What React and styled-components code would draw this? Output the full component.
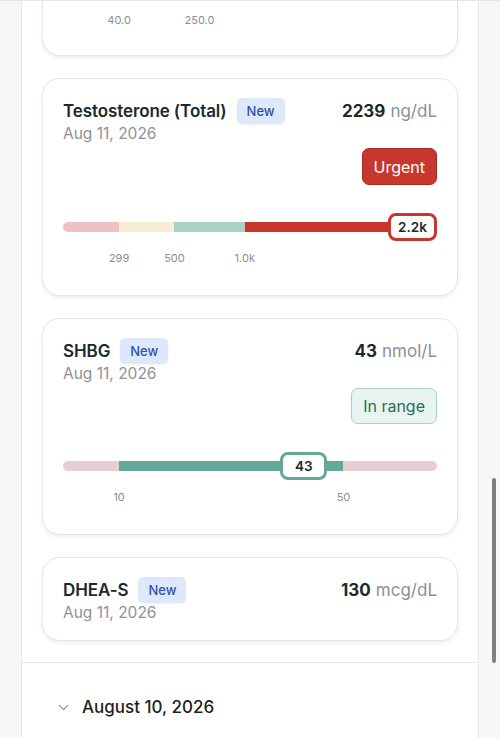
import React from 'react'
import styled, { createGlobalStyle } from 'styled-components'
import { ChevronDown } from 'lucide-react'

const GlobalStyle = createGlobalStyle`
  html, body {
    margin: 0;
    padding: 0;
    background: #f7f7f7;
    font-family: Inter, "Noto Sans", "Liberation Sans", sans-serif;
    -webkit-font-smoothing: antialiased;
  }
  * {
    box-sizing: border-box;
  }
`

const Screen = styled.div`
  height: 738px;
  overflow: hidden;
  border-top: 1px solid #e6e6e6;
  position: relative;
`

const Panel = styled.div`
  width: 458px;
  margin: 0 0 0 21px;
  background: #fff;
  border-left: 1px solid #e8e8e8;
  border-right: 1px solid #e8e8e8;
  min-height: 100%;
`

const List = styled.div`
  display: flex;
  flex-direction: column;
  gap: 22px;
  padding: 0 20px 21px;
  border-bottom: 1px solid #e8e8e8;
`

const Card = styled.div`
  background: #fff;
  border: 1px solid #e6e6e6;
  border-radius: 18px;
  box-shadow: 0 2px 4px rgba(0, 0, 0, 0.07);
  padding: 19px 20px 18px;
`

/* the card that is scrolled past the top edge: only its tail shows */
const CardTail = styled(Card)`
  border-top: none;
  border-radius: 0 0 18px 18px;
  padding-top: 12px;
  padding-bottom: 16px;
`

const HeaderRow = styled.div`
  display: flex;
  align-items: center;
  justify-content: space-between;
  height: 26px;
`

const TitleWrap = styled.div`
  display: flex;
  align-items: center;
  gap: 10px;
`

const Title = styled.div`
  font-size: 17px;
  font-weight: 600;
  color: #1b2a2a;
  letter-spacing: -0.1px;
`

const NewBadge = styled.span`
  background: #dfe8fb;
  color: #3150a6;
  font-size: 13px;
  font-weight: 500;
  border-radius: 5px;
  padding: 0 10px;
  height: 26px;
  display: inline-flex;
  align-items: center;
  box-shadow: 0 1px 2px rgba(50, 80, 160, 0.08);
`

const Value = styled.div`
  font-size: 17px;
  font-weight: 700;
  color: #1b2a2a;
  span {
    font-weight: 400;
    color: #8a9196;
    margin-left: 5px;
  }
`

const DateText = styled.div`
  font-size: 15.5px;
  line-height: 18px;
  margin-top: 1px;
  color: #8c9297;
`

const StatusRow = styled.div`
  display: flex;
  justify-content: flex-end;
  margin-top: 5px;
`

const Status = styled.div`
  height: ${p => (p.$urgent ? '37px' : '36px')};
  padding: 0 11px;
  border-radius: 7px;
  display: flex;
  align-items: center;
  font-size: 16px;
  background: ${p => (p.$urgent ? '#c8372e' : '#e8f4f0')};
  color: ${p => (p.$urgent ? '#fff' : '#2e6b5c')};
  border: 1px solid ${p => (p.$urgent ? '#a82b23' : '#a9d0c4')};
`

const TrackArea = styled.div`
  position: relative;
  height: 28px;
  margin-top: 28px;
  display: flex;
  align-items: center;
`

const Bar = styled.div`
  display: flex;
  width: 100%;
  height: 10px;
  border-radius: 5px;
  overflow: hidden;
`

const Segment = styled.div`
  height: 100%;
  background: ${p => p.$color};
`

const Marker = styled.div`
  position: absolute;
  top: 0;
  height: 28px;
  background: #fff;
  border: 3px solid ${p => p.$color};
  border-radius: 8px;
  display: flex;
  align-items: center;
  justify-content: center;
  font-size: 13.5px;
  font-weight: 600;
  color: #1b2a2a;
`

const Labels = styled.div`
  position: relative;
  height: 14px;
  margin-top: ${p => (p.$flush ? '0' : '10px')};
  margin-bottom: 12px;
`

const Tick = styled.span`
  position: absolute;
  top: 0;
  transform: translateX(-50%);
  font-size: 11px;
  line-height: 14px;
  color: #8a8f93;
`

const DayHeader = styled.div`
  display: flex;
  align-items: center;
  gap: 10px;
  padding: 0 33px;
  height: 88px;
  font-size: 17px;
  font-weight: 500;
  color: #1d1f20;
`

const Scrollbar = styled.div`
  position: absolute;
  right: 4px;
  top: 477px;
  width: 4px;
  height: 185px;
  border-radius: 2px;
  background: #7f7f7f;
`

const pink = '#eec1c4'
const cream = '#f8edd6'
const sage = '#a9d1c7'
const red = '#c9372c'
const teal = '#64a898'
const rose = '#e8cdd3'

const results = [
  {
    name: 'Testosterone (Total)',
    value: '2239',
    unit: 'ng/dL',
    status: 'Urgent',
    urgent: true,
    segments: [
      [15, pink],
      [14.8, cream],
      [18.8, sage],
      [51.4, red]
    ],
    ticks: [
      [15, '299'],
      [29.8, '500'],
      [48.6, '1.0k']
    ],
    marker: { right: 0, width: 49, label: '2.2k', color: red }
  },
  {
    name: 'SHBG',
    value: '43',
    unit: 'nmol/L',
    status: 'In range',
    segments: [
      [15, rose],
      [60, teal],
      [25, rose]
    ],
    ticks: [
      [15, '10'],
      [75, '50']
    ],
    marker: { left: 64.4, width: 47, label: '43', color: teal }
  },
  {
    name: 'DHEA-S',
    value: '130',
    unit: 'mcg/dL'
  }
]

const TickRow = ({ ticks, flush }) => (
  <Labels $flush={flush}>
    {ticks.map(([x, t]) => (
      <Tick key={t} style={{ left: `${x}%` }}>
        {t}
      </Tick>
    ))}
  </Labels>
)

const ResultCard = ({ r }) => (
  <Card>
    <HeaderRow>
      <TitleWrap>
        <Title>{r.name}</Title>
        <NewBadge>New</NewBadge>
      </TitleWrap>
      <Value>
        {r.value}
        <span>{r.unit}</span>
      </Value>
    </HeaderRow>
    <DateText>Aug 11, 2026</DateText>
    {r.status && (
      <>
        <StatusRow>
          <Status $urgent={r.urgent}>{r.status}</Status>
        </StatusRow>
        <TrackArea>
          <Bar>
            {r.segments.map(([w, c], i) => (
              <Segment key={i} $color={c} style={{ width: `${w}%` }} />
            ))}
          </Bar>
          <Marker
            $color={r.marker.color}
            style={
              r.marker.right !== undefined
                ? { right: 0, width: r.marker.width }
                : {
                    left: `calc(${r.marker.left}% - ${r.marker.width / 2}px)`,
                    width: r.marker.width
                  }
            }
          >
            {r.marker.label}
          </Marker>
        </TrackArea>
        <TickRow ticks={r.ticks} />
      </>
    )}
  </Card>
)

export default function App() {
  return (
    <>
      <GlobalStyle />
      <Screen>
        <Panel>
          <List>
            <CardTail>
              <TickRow
                flush
                ticks={[
                  [15, '40.0'],
                  [36.5, '250.0']
                ]}
              />
            </CardTail>
            {results.map(r => (
              <ResultCard key={r.name} r={r} />
            ))}
          </List>
          <DayHeader>
            <ChevronDown size={17} color="#8a8a8e" strokeWidth={1.6} />
            August 10, 2026
          </DayHeader>
        </Panel>
        <Scrollbar />
      </Screen>
    </>
  )
}
